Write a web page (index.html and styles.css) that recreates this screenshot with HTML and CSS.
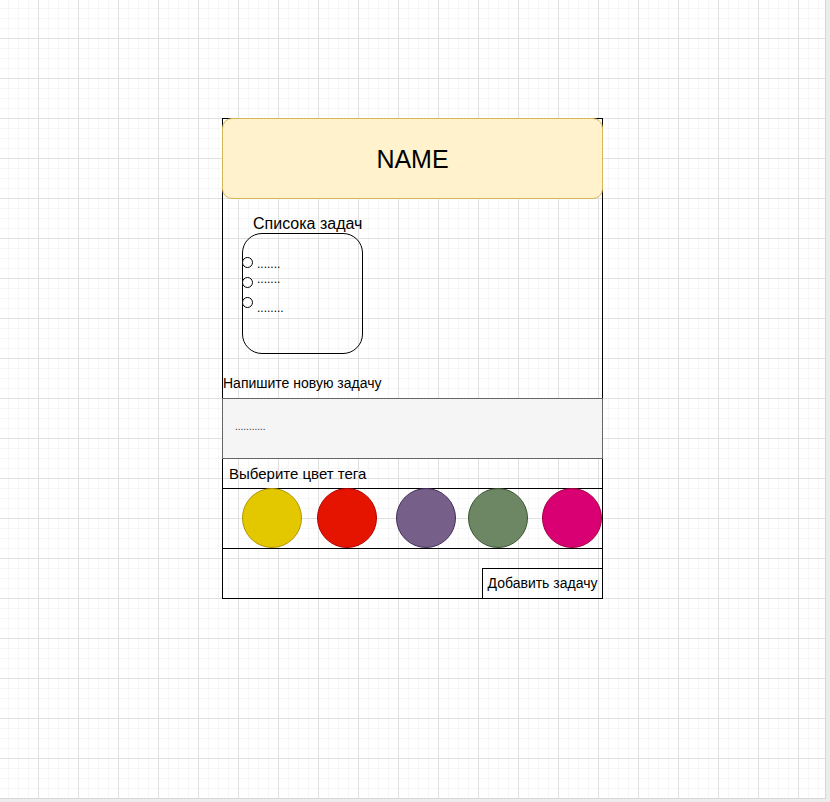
FILE: index.html
```html
<!DOCTYPE html>
<html lang="ru">
<head>
<meta charset="utf-8">
<title>Mockup</title>
<link rel="stylesheet" href="styles.css">
</head>
<body>
<div class="canvas">
  <div class="frame">
    <div class="header">NAME</div>
    <div class="list-title">Списока задач</div>
    <div class="list-box">
      <span class="bullet b1"></span><span class="dots d1">.......</span>
      <span class="bullet b2"></span><span class="dots d2">.......</span>
      <span class="bullet b3"></span><span class="dots d3">........</span>
    </div>
    <div class="label-new">Напишите новую задачу</div>
    <div class="input"><span class="placeholder">...........</span></div>
    <div class="label-color">Выберите цвет тега</div>
    <div class="colors">
      <span class="swatch yellow"></span>
      <span class="swatch red"></span>
      <span class="swatch purple"></span>
      <span class="swatch green"></span>
      <span class="swatch pink"></span>
    </div>
    <div class="footer">
      <div class="btn">Добавить задачу</div>
    </div>
  </div>
</div>
</body>
</html>
```

FILE: styles.css
```css
html, body {
  margin: 0;
  padding: 0;
}
body {
  background: #ececec;
  width: 830px;
  height: 802px;
  overflow: hidden;
  font-family: "Liberation Sans", Arial, sans-serif;
  color: #000;
}
.canvas {
  box-sizing: border-box;
  width: 826px;
  height: 799px;
  padding: 118px 0 0 222px;
  background-color: #fff;
  background-image:
    linear-gradient(#e0e0e0 1px, transparent 1px),
    linear-gradient(90deg, #e0e0e0 1px, transparent 1px),
    linear-gradient(#f6f6f6 1px, transparent 1px),
    linear-gradient(90deg, #f6f6f6 1px, transparent 1px);
  background-size: 40px 40px, 40px 40px, 10px 10px, 10px 10px;
  background-position: 38px 38px, 38px 38px, 8px 8px, 8px 8px;
  border-right: 1px solid #d8d8d8;
  border-bottom: 1px solid #d8d8d8;
}
.frame {
  width: 379px;
  border: 1px solid #000;
  display: flex;
  flex-direction: column;
}
.header {
  box-sizing: border-box;
  height: 81px;
  margin: -1px -1px 0 -1px;
  background: #fff2cc;
  border: 1px solid #d6b656;
  border-radius: 10px;
  display: flex;
  align-items: center;
  justify-content: center;
  font-size: 25px;
  line-height: 28px;
}
.list-title {
  margin-top: 16px;
  height: 18px;
  padding-left: 30px;
  font-size: 16px;
  line-height: 18px;
}
.list-box {
  position: relative;
  box-sizing: border-box;
  width: 121px;
  height: 121px;
  margin-left: 19px;
  border: 1px solid #000;
  border-radius: 20px;
}
.bullet {
  position: absolute;
  left: -1px;
  box-sizing: border-box;
  width: 11px;
  height: 11px;
  border: 1px solid #000;
  border-radius: 50%;
  background: #fff;
}
.b1 { top: 23px; }
.b2 { top: 43px; }
.b3 { top: 63px; }
.dots {
  position: absolute;
  left: 14px;
  font-size: 12px;
  line-height: 14px;
}
.d1 { top: 23px; }
.d2 { top: 38px; }
.d3 { top: 67px; }
.label-new {
  margin-top: 21px;
  height: 16px;
  font-size: 14px;
  line-height: 16px;
}
.input {
  box-sizing: border-box;
  height: 61px;
  margin: 7px -1px 0 -1px;
  padding: 22px 0 0 12px;
  background: #f5f5f5;
  border: 1px solid #666;
}
.placeholder {
  display: block;
  font-size: 10px;
  line-height: 12px;
  color: #333;
}
.label-color {
  height: 29px;
  padding-left: 6px;
  font-size: 15px;
  line-height: 29px;
}
.colors {
  display: flex;
  height: 59px;
  margin: 0 -1px;
  border-top: 1px solid #000;
  border-bottom: 1px solid #000;
}
.swatch {
  box-sizing: border-box;
  width: 60px;
  height: 60px;
  margin-top: -1px;
  border-radius: 50%;
  border: 1px solid;
}
.yellow { margin-left: 20px; background: #e3c800; border-color: #b09500; }
.red { margin-left: 15px; background: #e51400; border-color: #b20000; }
.purple { margin-left: 19px; background: #76608a; border-color: #432d57; }
.green { margin-left: 12px; background: #6d8764; border-color: #3a5431; }
.pink { margin-left: 14px; background: #d80073; border-color: #a50040; }
.footer {
  height: 49px;
  display: flex;
  justify-content: flex-end;
  align-items: flex-end;
}
.btn {
  box-sizing: border-box;
  width: 121px;
  height: 31px;
  margin: 0 -1px -1px 0;
  border: 1px solid #000;
  font-size: 14px;
  line-height: 29px;
  text-align: center;
}
```
